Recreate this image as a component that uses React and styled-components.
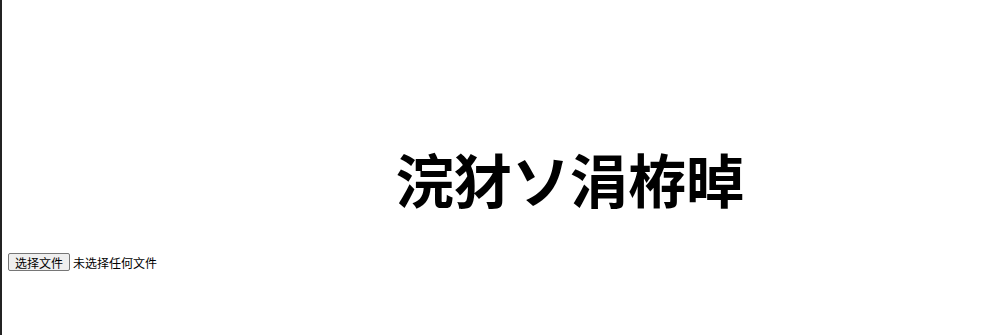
import React from 'react';
import styled, { createGlobalStyle } from 'styled-components';

const GlobalStyle = createGlobalStyle`
  html, body {
    margin: 0;
    padding: 0;
    background: #fff;
  }
  body {
    font-family: 'Noto Sans CJK SC', 'Noto Sans', sans-serif;
  }
`;

const Page = styled.div`
  min-height: 335px;
  box-sizing: border-box;
  border-left: 2px solid #232323;
  padding-top: 143px;
`;

const Title = styled.h1`
  margin: 0;
  padding-left: 394px;
  font-family: 'Noto Sans CJK SC', sans-serif;
  font-size: 58px;
  font-weight: 700;
  line-height: 70px;
  color: #000;
`;

const Uploader = styled.div`
  display: flex;
  align-items: center;
  gap: 3px;
  margin-top: 40px;
  padding-left: 6px;
`;

const HiddenInput = styled.input`
  display: none;
`;

const PickButton = styled.label`
  display: inline-flex;
  align-items: center;
  height: 18px;
  box-sizing: border-box;
  padding: 0 6px;
  border: 1px solid #767676;
  border-radius: 2px;
  background: #efefef;
  font-size: 12px;
  color: #000;
  cursor: default;
`;

const FileStatus = styled.span`
  font-size: 12px;
  color: #000;
`;

export default function App() {
  return (
    <>
      <GlobalStyle />
      <Page>
        <Title>浣犲ソ涓栫晫</Title>
        <Uploader>
          <PickButton>
            选择文件
            <HiddenInput type="file" />
          </PickButton>
          <FileStatus>未选择任何文件</FileStatus>
        </Uploader>
      </Page>
    </>
  );
}
